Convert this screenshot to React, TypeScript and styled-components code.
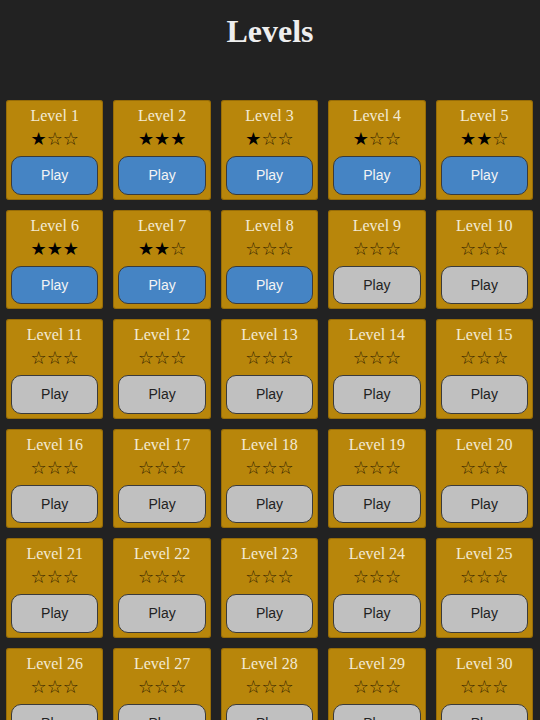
import React from "react";
import styled, { createGlobalStyle } from "styled-components";

const Global = createGlobalStyle`
  html {
    scrollbar-width: none;
    background: #222222;
  }
  html::-webkit-scrollbar { display: none; }
  body {
    margin: 0;
    background: #222222;
    font-family: "Liberation Serif", "Times New Roman", serif;
  }
`;

const Page = styled.div`
  display: flex;
  flex-direction: column;
  min-height: 720px;
`;

const Title = styled.h1`
  margin: 0;
  padding-top: 13px;
  font-family: "Liberation Serif", "Times New Roman", serif;
  font-size: 32px;
  line-height: 36px;
  font-weight: bold;
  color: #eeeeee;
  text-align: center;
`;

const Grid = styled.div`
  display: grid;
  grid-template-columns: repeat(5, 1fr);
  column-gap: 10px;
  row-gap: 10px;
  padding: 51px 7px 20px 6px;
`;

const Card = styled.div`
  background: #b8860b;
  border-radius: 3px;
  box-shadow: inset 0 0 0 1px rgba(90, 60, 0, 0.35);
  display: flex;
  flex-direction: column;
  align-items: stretch;
  padding: 6px 5px 5px;
  height: 99.5px;
  box-sizing: border-box;
`;

const LevelName = styled.div`
  font-family: "Liberation Serif", "Times New Roman", serif;
  font-size: 16px;
  line-height: 20px;
  color: #f3ead3;
  text-align: center;
`;

const Stars = styled.div`
  font-family: "DejaVu Sans", sans-serif;
  font-size: 18px;
  line-height: 25px;
  height: 25px;
  text-align: center;
  letter-spacing: 0;
`;

const Star = styled.span<{ $filled: boolean }>`
  color: ${(p) => (p.$filled ? "#000000" : "#2e2000")};
`;

const PlayButton = styled.button<{ $unlocked: boolean }>`
  margin-top: 5px;
  height: 38.5px;
  border-radius: 10px;
  border: 1.5px solid #3a3a3a;
  background: ${(p) => (p.$unlocked ? "#4584c4" : "#c0c0c0")};
  color: ${(p) => (p.$unlocked ? "#f4f4f4" : "#222222")};
  font-family: "Liberation Sans", Arial, sans-serif;
  font-size: 14px;
  padding: 0;
  cursor: pointer;
`;

const starCounts = [1, 3, 1, 1, 2, 3, 2, 0];

const levels = Array.from({ length: 30 }, (_, i) => ({
  n: i + 1,
  stars: starCounts[i] ?? 0,
  unlocked: i < 8,
}));

export default function App() {
  return (
    <Page>
      <Global />
      <Title>Levels</Title>
      <Grid>
        {levels.map((l) => (
          <Card key={l.n}>
            <LevelName>Level {l.n}</LevelName>
            <Stars>
              {[0, 1, 2].map((s) => (
                <Star key={s} $filled={s < l.stars}>
                  {s < l.stars ? "★" : "☆"}
                </Star>
              ))}
            </Stars>
            <PlayButton $unlocked={l.unlocked}>Play</PlayButton>
          </Card>
        ))}
      </Grid>
    </Page>
  );
}
